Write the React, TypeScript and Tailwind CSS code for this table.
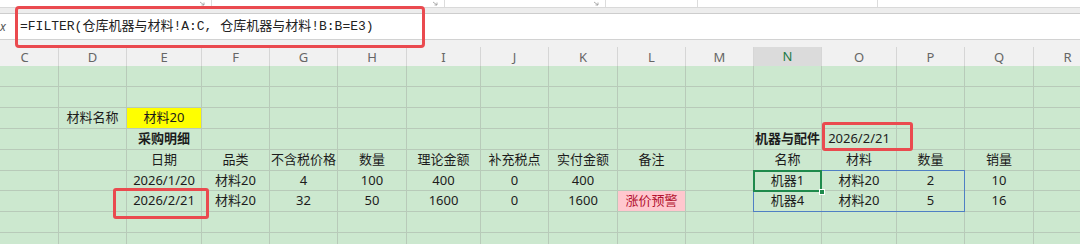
type Cell = { t: string; cls?: string } | null;

const letters = ["C", "D", "E", "F", "G", "H", "I", "J", "K", "L", "M", "N", "O", "P", "Q", "R"];
const cols = "grid-cols-[68px_68px_75px_68px_68px_69px_74px_68px_69px_68px_68px_68px_75px_68px_69px_68px]";

const blank = (): Cell[] => Array(16).fill(null);

function row(entries: Record<number, Cell>): Cell[] {
    const r = blank();
    Object.entries(entries).forEach(([k, v]) => (r[Number(k)] = v));
    return r;
}

const rows: Cell[][] = [
    blank(),
    blank(),
    row({ 1: { t: "材料名称" }, 2: { t: "材料20", cls: "bg-[#ffff00]" } }),
    row({ 2: { t: "采购明细", cls: "font-bold" }, 11: { t: "机器与配件", cls: "font-bold" }, 12: { t: "2026/2/21" } }),
    row({
        2: { t: "日期" }, 3: { t: "品类" }, 4: { t: "不含税价格" }, 5: { t: "数量" }, 6: { t: "理论金额" },
        7: { t: "补充税点" }, 8: { t: "实付金额" }, 9: { t: "备注" },
        11: { t: "名称" }, 12: { t: "材料" }, 13: { t: "数量" }, 14: { t: "销量" },
    }),
    row({
        2: { t: "2026/1/20" }, 3: { t: "材料20" }, 4: { t: "4" }, 5: { t: "100" }, 6: { t: "400" },
        7: { t: "0" }, 8: { t: "400" },
        11: { t: "机器1" }, 12: { t: "材料20" }, 13: { t: "2" }, 14: { t: "10" },
    }),
    row({
        2: { t: "2026/2/21" }, 3: { t: "材料20" }, 4: { t: "32" }, 5: { t: "50" }, 6: { t: "1600" },
        7: { t: "0" }, 8: { t: "1600" }, 9: { t: "涨价预警", cls: "bg-[#ffc7ce] text-[#b3122f]" },
        11: { t: "机器4" }, 12: { t: "材料20" }, 13: { t: "5" }, 14: { t: "16" },
    }),
    blank(),
    blank(),
];

const rowHeights = ["h-[21px]", "h-[21px]", "h-[21px]", "h-[21px]", "h-[21px]", "h-[20px]", "h-[21px]", "h-[21px]", "h-[21px]"];

// little dialog-launcher marks left over from the ribbon
function Launcher() {
    return (
        <svg width="6" height="5" viewBox="0 0 6 5" className="mr-[6px] mb-[1px]">
            <path d="M1 1 L5 4 M5 1.5 V4 H2.5" stroke="#9a9a9a" strokeWidth="0.8" fill="none" />
        </svg>
    );
}

export default function App() {
    return (
        <div className="relative w-[1080px] h-[244px] overflow-hidden bg-white font-['Noto_Sans','Noto_Sans_CJK_SC',sans-serif]">
            {/* ribbon remnant */}
            <div className="flex h-[7px] bg-white">
                {[212, 233, 161, 92, 180].map((w, i) => (
                    <div key={i} style={{ width: w }} className="flex items-end justify-end border-r border-[#dcdcdc]">
                        {i < 3 && <Launcher />}
                    </div>
                ))}
            </div>
            <div className="h-[7px] bg-[#ededed] border-t border-[#d9d9d9] border-b border-b-[#cdcdcd]" />

            {/* formula bar */}
            <div className="flex items-center h-[26px] border-b border-[#d2d2d2] bg-white">
                <span className="w-[17px] italic text-[12px] text-[#555]">x</span>
                <span className="pl-[3px] text-[13px] text-[#222] font-['Liberation_Mono','Noto_Sans_CJK_SC',monospace]">
                    =FILTER(仓库机器与材料!A:C, 仓库机器与材料!B:B=E3)
                </span>
            </div>

            {/* column headers */}
            <div className="h-[26px] bg-[#f1f1f1] flex items-end overflow-hidden">
                <div className={`grid ${cols} -ml-[9px] h-[19px]`}>
                    {letters.map((l) => (
                        <div
                            key={l}
                            className={`flex items-center justify-center border-r border-[#d6d6d6] text-[13px] ${
                                l === "N"
                                    ? "bg-[#dbdbdb] text-[#1d7a48] border-b-2 border-b-[#1d7a48]"
                                    : "text-[#666]"
                            }`}
                        >
                            {l}
                        </div>
                    ))}
                </div>
            </div>

            {/* sheet */}
            <div className="bg-[#cce8cf] overflow-hidden">
                <div className={`grid ${cols} -ml-[9px]`}>
                    {rows.map((r, ri) =>
                        r.map((c, ci) => (
                            <div
                                key={`${ri}-${ci}`}
                                className={`${rowHeights[ri]} flex items-center justify-center whitespace-nowrap border-r border-b border-[#b8cab9] text-[13px] text-[#1c1c1c] ${c?.cls ?? ""}`}
                            >
                                {c?.t}
                            </div>
                        ))
                    )}
                </div>
            </div>

            {/* annotations & selection */}
            <div className="absolute left-[15px] top-[6px] w-[410px] h-[42px] border-[3px] border-[#ea4a4f] rounded-[4px]" />
            <div className="absolute left-[113px] top-[188px] w-[96px] h-[31px] border-[3px] border-[#ea4a4f] rounded-[3px]" />
            <div className="absolute left-[822px] top-[122px] w-[91px] h-[29px] border-[3px] border-[#ea4a4f] rounded-[3px]" />
            <div className="absolute left-[753px] top-[170px] w-[212px] h-[42px] border border-[#4f7fc4]" />
            <div className="absolute left-[753px] top-[170px] w-[69px] h-[22px] border-2 border-[#1f8a4c]" />
            <div className="absolute left-[819px] top-[189px] w-[6px] h-[6px] bg-[#1f8a4c] border border-white" />
        </div>
    );
}
